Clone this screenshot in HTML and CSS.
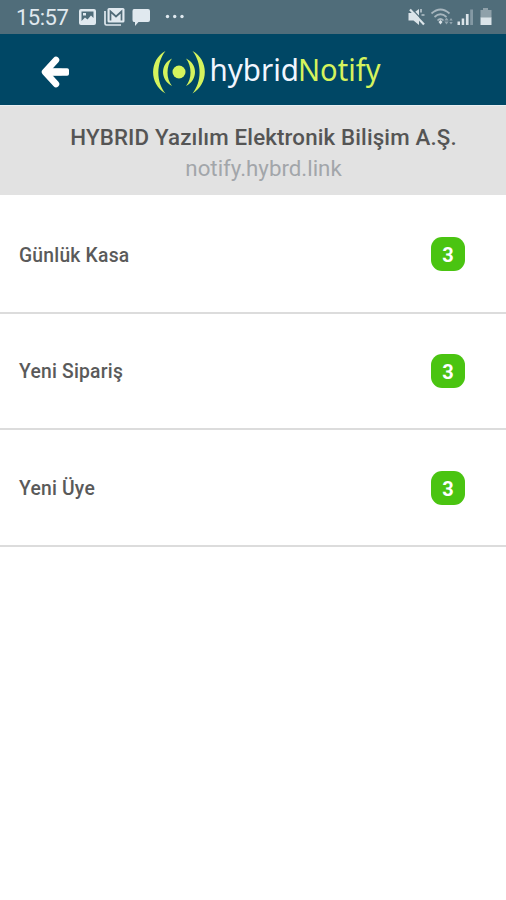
FILE: index.html
```html
<!DOCTYPE html>
<html lang="tr">
<head>
<meta charset="utf-8">
<title>hybridNotify</title>
<link rel="stylesheet" href="styles.css">
</head>
<body>
<div class="status">
  <span class="clock">15:57</span>
  <svg class="left-icons" width="110" height="34" viewBox="76 0 110 34" fill="#e0e9ef">
    <path fill-rule="evenodd" d="M81 9h13q2 0 2 2v12q0 2-2 2H81q-2 0-2-2V11q0-2 2-2zm.5 2.500v9.500l3.500-3.500 2.500 2 3.500-4 2.500 2.500v-6.500zM83 13h3v2.500h-3z"/>
    <path d="M105 11v12.500q0 1.500 1.500 1.500H121" fill="none" stroke="#e0e9ef" stroke-width="1.700"/>
    <rect x="107.500" y="8" width="17" height="14.500" rx="1.500"/>
    <path d="M110.500 20.500v-9l5.500 5 5.500-5v9" fill="none" stroke="#506b78" stroke-width="1.700"/>
    <path d="M134 9h14q2 0 2 2v9q0 2-2 2h-9.500l-3.500 4v-4h-1q-1.500 0-1.500-2v-9q0-2 1.500-2z"/>
    <circle cx="167.500" cy="16.500" r="1.700"/><circle cx="174.700" cy="16.500" r="1.700"/><circle cx="182" cy="16.500" r="1.700"/>
  </svg>
  <svg class="right-icons" width="90" height="34" viewBox="406 0 90 34" fill="#dbe4e9">
    <path d="M408.500 13h5l5.500-4v16l-5.500-4.500h-5z"/>
    <path d="M411.500 8.500l13 14" stroke="#506d7a" stroke-width="1.200"/>
    <path d="M410 9.500l14 15" stroke="#dbe4e9" stroke-width="2.200"/>
    <path d="M421 9v3.500M421.500 15h3" stroke="#b5c3cb" stroke-width="1.700"/>
    <g fill="none" stroke="#a7b6be" stroke-width="1.700"><path d="M431.500 13.500q9-8 18 0M434.500 17q6-5.500 12 0M437.500 20.500q3-3 6 0"/></g>
    <path d="M438.500 22l2-2 2 2-2 2.500z"/>
    <path d="M446.500 17.500l2.200 3h-4.400zm0 7l2.200-3h-4.400zm4.500-6.500l1.700 2.500h-3.400zm0 6.500l1.700-2.500h-3.400z" fill="#91a4ae"/>
    <path d="M457.500 21.500h2.500v3.500h-2.500zM461.700 18.500h2.500v6.500h-2.500zM465.900 14h2.700v11h-2.700z"/>
    <path d="M470.200 9.500h2.800v15.500h-2.800z" fill="#8499a4"/>
    <path d="M483 8h5v2h3.500v8h-11v-8h2.500z" fill="#8fa1aa"/><path d="M480.500 17.500h11v7.500h-11z"/>
  </svg>
</div>
<header class="appbar">
  <svg class="back" width="30" height="32" viewBox="40 56 30 32">
    <path d="M56 60L45 72l11 12M46 72h15" fill="none" stroke="#fff" stroke-width="6.500" stroke-linecap="round" stroke-linejoin="round"/>
    <rect x="46" y="68.300" width="23" height="7.500" rx="1.800" fill="#fff"/>
  </svg>
  <svg class="logo" width="240" height="50" viewBox="151 47 240 50">
    <g fill="#d5f35d">
      <circle cx="179" cy="72" r="6.500"/>
      <path d="M165.500 51C149 60 149 84 165.500 93.500C156 82 156 63 165.500 51zM172 58.500C160 64 160 80 172 86C166 79 166 66 172 58.500zM192.500 51C209 60 209 84 192.500 93.500C202 82 202 63 192.500 51zM186 58.500C198 64 198 80 186 86C192 79 192 66 186 58.500z"/>
    </g>
    <text x="209.500" y="81" textLength="89.500" lengthAdjust="spacingAndGlyphs" class="brand">hybrid</text>
    <text x="298" y="81" textLength="82.500" lengthAdjust="spacingAndGlyphs" class="brand accent">Notify</text>
  </svg>
</header>
<section class="company">
  <h1>HYBRID Yazılım Elektronik Bilişim A.Ş.</h1>
  <p>notify.hybrd.link</p>
</section>
<main>
  <div class="row"><span>Günlük Kasa</span><b>3</b></div>
  <div class="row"><span>Yeni Sipariş</span><b>3</b></div>
  <div class="row"><span>Yeni Üye</span><b>3</b></div>
</main>
</body>
</html>
```
FILE: styles.css
```css
* { box-sizing: border-box; }
body { margin: 0; background: #fff; font-family: Roboto, "Liberation Sans", sans-serif; }
.status { height: 34px; background: #506d7a; display: flex; align-items: center; }
.clock { width: 60px; margin-left: 16px; padding-top: 1px; color: #e0e9ef; font-size: 22px; line-height: 34px; letter-spacing: -.5px; }
.left-icons { flex: none; }
.right-icons { flex: none; margin-left: auto; margin-right: 10px; }
.appbar { height: 72px; background: #004765; display: flex; align-items: center; padding: 4px 0 0 40px; border-bottom: 1px solid #e9eff2; }
.back { flex: none; }
.logo { flex: none; margin-left: 81px; overflow: visible; }
.brand { font-family: "Noto Sans", sans-serif; font-size: 30.5px; fill: #f1f6ff; }
.accent { fill: #d5f35d; }
.company { height: 89px; background: #e2e2e2; padding: 16px 0 0 21px; text-align: center; white-space: nowrap; }
h1 { margin: 0; font-size: 22.3px; line-height: 31px; font-weight: 500; letter-spacing: .15px; color: #555; }
p { margin: 0; font-size: 22.3px; line-height: 30px; color: #a2a6aa; }
.row { height: 116.7px; display: flex; align-items: center; justify-content: space-between; padding: 0 41px 0 19px; border-bottom: 2px solid #dcdcdc; }
.row:first-child { height: 118.5px; padding-top: 2px; }
.row span { padding-top: 2px; font-size: 19.3px; font-weight: 500; letter-spacing: .22px; color: #5a5a5a; }
.row b { width: 34px; height: 34px; border-radius: 11px; background: #4ac411; color: #fff; font-size: 20px; font-weight: 700; line-height: 37px; text-align: center; }
```
